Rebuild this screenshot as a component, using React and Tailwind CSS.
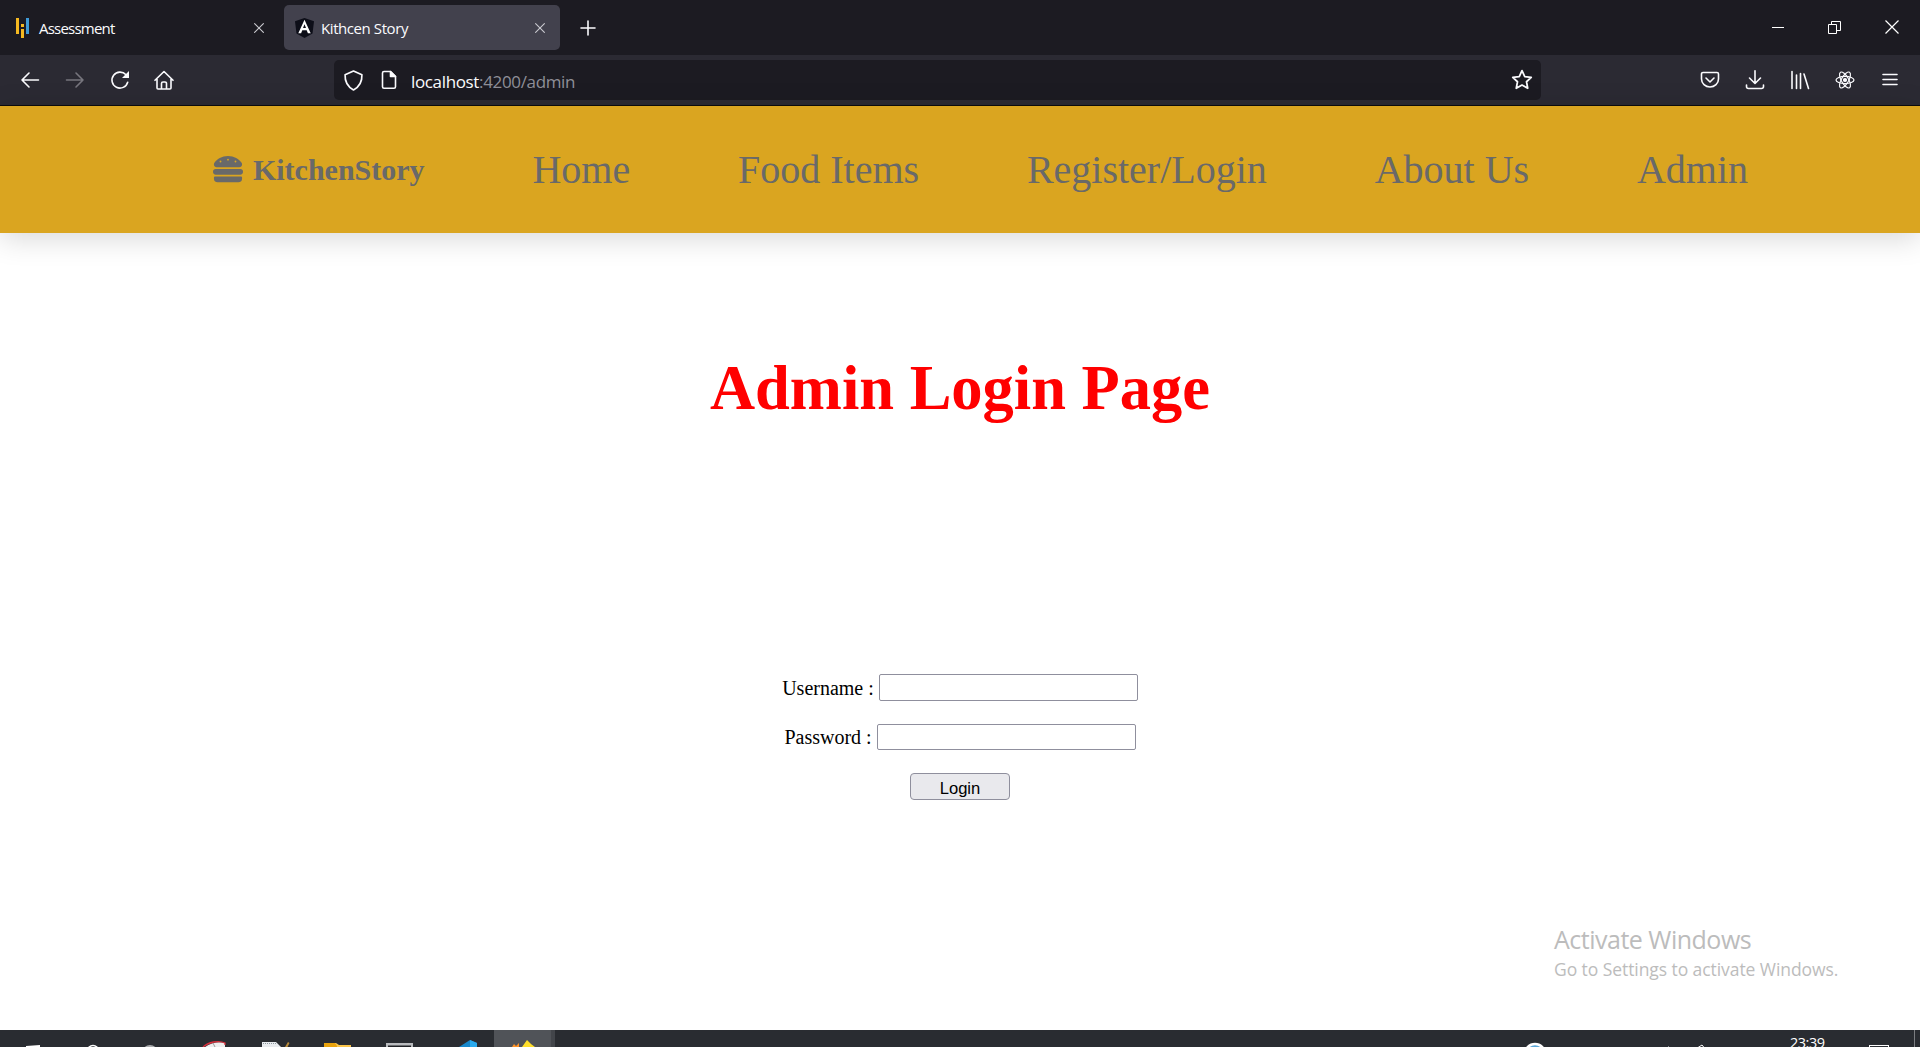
import React from "react";
import { FaHamburger } from "react-icons/fa";

const seg = "font-['Open_Sans',sans-serif]";

function Icon({ children, size = 20, className = "", sw = 1.6 }) {
  return (
    <svg width={size} height={size} viewBox="0 0 20 20" fill="none" stroke="currentColor" strokeWidth={sw} strokeLinecap="round" strokeLinejoin="round" className={"shrink-0 " + className}>
      {children}
    </svg>
  );
}

function TabBar() {
  return (
    <div className="flex h-[55px] bg-[#1c1b22] text-[#fbfbfe]">
      <div className="flex h-[55px] w-[284px] items-center pl-4 pr-[17px]">
        <svg width="15" height="22" viewBox="0 0 15 22" className="shrink-0">
          <path d="M0 1h3v16H0z" fill="#f5b921" />
          <path d="M5 7h3v3H5zM5 12h3v9H5z" fill="#f5b921" />
          <path d="M10 1h3v16h-3z" fill="#3f9bd8" />
        </svg>
        <span className={`${seg} ml-2 pt-[2px] text-[15px] tracking-[-0.78px]`}>Assessment</span>
        <Icon size={16} sw={1.4} className="ml-auto text-[#c9c9cf]"><path d="M4.500 4.500l11 11M15.500 4.500l-11 11" /></Icon>
      </div>
      <div className="mt-[5px] flex h-[45px] w-[276px] items-center rounded-[5px] bg-[#42414d] pl-[11px] pr-[12px]">
        <svg width="19" height="20" viewBox="0 0 19 20" className="shrink-0">
          <path d="M9.500 0L19 3.300l-1.500 12.200L9.500 20 1.500 15.500 0 3.300z" fill="#0d0e18" />
          <path d="M9.500 1.700L3.300 15.200h2.800l1.200-2.900h4.400l1.200 2.900h2.800zm0 4.500l1.500 3.900H8z" fill="#fff" fillRule="evenodd" />
        </svg>
        <span className={`${seg} ml-[7px] pt-[2px] text-[15px] tracking-[-0.42px]`}>Kithcen Story</span>
        <Icon size={16} sw={1.4} className="ml-auto text-[#c9c9cf]"><path d="M4.500 4.500l11 11M15.500 4.500l-11 11" /></Icon>
      </div>
      <div className="flex h-[55px] w-[55px] items-center justify-center">
        <Icon size={20} sw={1.6}><path d="M10 3v14M3 10h14" /></Icon>
      </div>
      <div className="ml-auto flex h-[54px] items-center">
        <div className="flex w-[57px] justify-center"><div className="h-px w-3 bg-white" /></div>
        <div className="flex w-[57px] justify-center">
          <svg width="13" height="13" viewBox="0 0 13 13" fill="none" stroke="white"><path d="M.5 3.500h8v9h-8zM3.500 3V.5h9v9H9" /></svg>
        </div>
        <div className="flex w-[57px] justify-center">
          <svg width="14" height="14" viewBox="0 0 14 14" fill="none" stroke="white" strokeWidth="1.200"><path d="M.5.5l13 13M13.500.5l-13 13" /></svg>
        </div>
      </div>
    </div>
  );
}

function Toolbar() {
  return (
    <div className="flex h-[51px] border-b border-[#0c0c0d] bg-[#2b2a33] text-[#fbfbfe]">
      <div className="flex w-[334px] items-center gap-[25px] pl-5">
        <Icon><path d="M18.500 10H2M9 3L2 10l7 7" /></Icon>
        <Icon className="text-[#77767e]"><path d="M1.500 10H18M11 3l7 7-7 7" /></Icon>
        <Icon><path d="M17.700 12.200A8 8 0 1 1 16 4.800" /><path d="M19 1v7h-7z" fill="currentColor" stroke="none" /></Icon>
        <Icon className="-ml-px"><path d="M1 10.300L10 1.500l9 8.800M3 9v9a1 1 0 0 0 1 1h12a1 1 0 0 0 1-1V9M7.500 19v-5.500a1.500 1.500 0 0 1 1.500-1.500h2a1.500 1.500 0 0 1 1.500 1.500V19" /></Icon>
      </div>
      <div className="mt-[5px] flex h-10 w-[1207px] items-center rounded-[5px] bg-[#1c1b22] pl-[9px] pr-[8px]">
        <Icon size={21}><path d="M10 1L18 4.500c.3 6-2.600 11.500-8 14.500-5.400-3-8.300-8.500-8-14.500z" /></Icon>
        <Icon size={20} className="ml-[15px]"><path d="M5.500 1.500h6l5 5v10.300a1.500 1.500 0 0 1-1.500 1.500H5A1.500 1.500 0 0 1 3.500 16.800V3a1.500 1.500 0 0 1 1.500-1.500z" /><path d="M11.500 1.500v5h5z" fill="currentColor" /></Icon>
        <span className={`${seg} ml-[12px] mt-[4px] text-[17px] tracking-[-0.35px]`}>localhost<span className="text-[#8f8f98]">:4200/admin</span></span>
        <Icon size={22} className="ml-auto"><path d="M10 1.500l2.500 5.400 5.900.7-4.300 4 1.100 5.900L10 14.600l-5.200 2.900 1.100-5.900-4.300-4 5.900-.7z" /></Icon>
      </div>
      <div className="ml-auto flex items-center gap-[25px] pr-5">
        <Icon><path d="M3 2.500h14a1.500 1.500 0 0 1 1.500 1.500v5a8.500 8 0 0 1-17 0V4A1.500 1.500 0 0 1 3 2.500zM6 8l4 4 4-4" /></Icon>
        <Icon><path d="M10 .8V13M4.500 8l5.500 5.500L15.500 8M1.500 15v1.500A2 2 0 0 0 3.500 18.500h13a2 2 0 0 0 2-2V15" /></Icon>
        <Icon><path d="M2 1.500v17M6.500 5v13.500M10.500 3.500v15M14 4l4.500 14.500" /></Icon>
        <Icon sw={1.2}><ellipse cx="10" cy="10" rx="9" ry="3.600" /><ellipse cx="10" cy="10" rx="9" ry="3.600" transform="rotate(60 10 10)" /><ellipse cx="10" cy="10" rx="9" ry="3.600" transform="rotate(120 10 10)" /><circle cx="10" cy="10" r="1.500" fill="currentColor" /></Icon>
        <Icon><path d="M3 4.500h14M3 9.500h14M3 14.500h14" /></Icon>
      </div>
    </div>
  );
}

function SiteNav() {
  return (
    <nav className="relative flex h-[127px] items-center justify-center gap-[107.800px] bg-[#daa520] pl-[41px] text-[40px] leading-none text-[#696969] shadow-[0_5px_28px_rgba(0,0,0,0.16)]">
      <div className="flex items-center text-[30px] font-bold">
        <FaHamburger size={30} className="mb-[2px] mr-[10px]" />
        <span>KitchenStory</span>
      </div>
      <span>Home</span>
      <span>Food Items</span>
      <span>Register/Login</span>
      <span>About Us</span>
      <span>Admin</span>
    </nav>
  );
}

function LoginForm() {
  return (
    <form className="mt-[238px] flex flex-col items-center text-[20px] leading-[27px]" onSubmit={(e) => e.preventDefault()}>
      <label className="flex h-[27px]">
        <span className="pt-px">Username :</span>
        <input type="text" className="ml-[5px] h-[27px] w-[259px] rounded-[2px] border border-[#8f8f9d] bg-white" />
      </label>
      <label className="mt-[23px] flex h-[26px]">
        <span>Password :</span>
        <input type="password" className="ml-[5px] h-[26px] w-[259px] rounded-[2px] border border-[#8f8f9d] bg-white" />
      </label>
      <button className="mt-[23px] flex h-[27px] w-[100px] items-center justify-center rounded-[4px] border border-[#8f8f9d] bg-[#e9e9ed] pt-[5px] font-['Liberation_Sans',sans-serif] text-[16.600px] leading-none">Login</button>
    </form>
  );
}

function ActivationNotice() {
  return (
    <div className={`absolute left-[1554px] top-[920px] whitespace-nowrap text-[#bcbcbc] ${seg}`}>
      <div className="text-[25px] leading-[38px] tracking-[-0.5px]">Activate Windows</div>
      <div className="text-[17.500px] leading-[22px] tracking-[-0.070px]">Go to Settings to activate Windows.</div>
    </div>
  );
}

function Taskbar() {
  return (
    <div className="flex h-[17px] items-start overflow-hidden bg-[#292c31]">
      <svg width="560" height="17" viewBox="0 0 560 17" className="shrink-0">
        <path d="M494 0h57v17h-57z" fill="#505358" />
        <path d="M551 0h4v17h-4z" fill="#42454a" />
        <path d="M26 16l14-1v2H26z" fill="#fff" />
        <circle cx="93" cy="21" r="5.500" fill="none" stroke="#fff" strokeWidth="1.500" />
        <circle cx="150" cy="23" r="8" fill="#a9abad" />
        <path d="M204 18c5-5 15-7 21-5v5z" fill="#eee" />
        <path d="M203 17c5-5 16-7 22-4v2" fill="none" stroke="#d9303c" strokeWidth="1.300" />
        <path d="M213 13l2 4" stroke="#9b9b9b" />
        <path d="M262 12h14l5 5h-19z" fill="#e8ebee" />
        <path d="M263 13.500h13" stroke="#8c969d" strokeDasharray="1 1" />
        <path d="M285 17l3-5 1.500 1-2 4z" fill="#b98a3a" />
        <path d="M324 13h12l3 2h12v2h-27z" fill="#fbc54a" />
        <path d="M324 13h11l2 3v1h-13z" fill="#e8a20c" />
        <path d="M386 13h27v4h-27z" fill="#b9bbbe" />
        <path d="M388 15.500h23V17h-23z" fill="#202226" />
        <path d="M459 17l11-7 7 3v4z" fill="#1687cb" />
        <path d="M470 10l7 3v4h-7z" fill="#29a9ed" />
        <path d="M512 17l2-3 2 2 3-3v4z" fill="#ff9226" />
        <path d="M522 17l5-7 4 4 4 3z" fill="#ffdf2b" />
      </svg>
      <div className={`ml-auto flex h-[17px] items-start text-white ${seg}`}>
        <svg width="180" height="17" viewBox="0 0 180 17" className="shrink-0">
          <circle cx="11" cy="24" r="10" fill="#5ba6d6" stroke="#fff" strokeWidth="2.500" />
          <path d="M144 16h1v1h-1z" fill="#8a8d91" />
          <path d="M174 17.500l4-2.500 2 2.500" fill="none" stroke="#fff" />
        </svg>
        <span className="ml-[86px] mt-[3px] w-[34px] whitespace-nowrap text-[14.500px] leading-[20px] tracking-[-0.500px]">23:39</span>
        <div className="ml-[45px] mt-[15px] h-[10px] w-5 border border-white" />
        <div className="ml-[25px] mr-[5px] h-[17px] w-px bg-[#7b7d81]" />
      </div>
    </div>
  );
}

export default function App() {
  return (
    <div className="relative flex h-[1047px] w-[1920px] flex-col overflow-hidden bg-white font-['Liberation_Serif',serif]">
      <TabBar />
      <Toolbar />
      <SiteNav />
      <main className="flex flex-1 flex-col items-center text-black">
        <h1 className="mt-[119px] h-[84px] text-[62.500px] font-bold leading-[72px] text-[#ff0000]">Admin Login Page</h1>
        <LoginForm />
      </main>
      <ActivationNotice />
      <Taskbar />
    </div>
  );
}
